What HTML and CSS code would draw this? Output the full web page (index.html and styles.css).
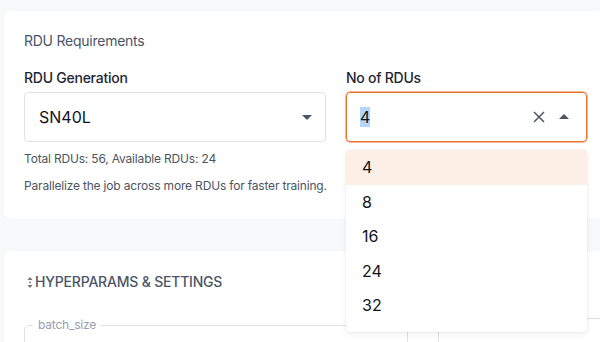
FILE: index.html
```html
<!DOCTYPE html>
<html lang="en">
  <head>
    <meta charset="UTF-8" />
    <title>RDU Requirements</title>
    <link rel="stylesheet" href="styles.css">
  </head>
  <body>
    <div class="page">
      <section class="card card-rdu">
        <h2 class="card-title">RDU Requirements</h2>
        <div class="field-row">
          <div class="field field-gen">
            <label class="field-label">RDU Generation</label>
            <div class="select">
              <span class="select-value">SN40L</span>
              <span class="caret caret-down"></span>
            </div>
            <p class="helper">Total RDUs: 56, Available RDUs: 24</p>
            <p class="helper helper-gap">Parallelize the job across more RDUs for faster training.</p>
          </div>
          <div class="field field-count">
            <label class="field-label">No of RDUs</label>
            <div class="select select-open">
              <span class="select-value"><span class="selected-text">4</span></span>
              <svg class="clear-icon" width="12" height="12" viewBox="0 0 12 12">
                <path d="M1 1 L11 11 M11 1 L1 11" stroke="#4b5563" stroke-width="1.5" fill="none" />
              </svg>
              <span class="caret caret-up"></span>
            </div>
            <ul class="menu">
              <li class="active">4</li>
              <li>8</li>
              <li>16</li>
              <li>24</li>
              <li>32</li>
            </ul>
          </div>
        </div>
      </section>
      <section class="card card-params">
        <h2 class="params-title">
          <svg class="sort-icon" width="6" height="11" viewBox="0 0 6 11">
            <path d="M3 0 L5.5 3 L0.5 3 Z M3 11 L0.5 8 L5.5 8 Z" fill="#6b7280" />
            <rect x="2.2" y="4.6" width="1.6" height="1.6" fill="#6b7280" />
          </svg>
          HYPERPARAMS &amp; SETTINGS
        </h2>
        <div class="params-grid">
          <fieldset class="outlined">
            <legend>batch_size</legend>
          </fieldset>
          <fieldset class="outlined">
            <legend></legend>
          </fieldset>
        </div>
      </section>
    </div>
  </body>
</html>
```

FILE: styles.css
```css
html,
body {
  margin: 0;
  overflow: hidden;
  height: 342px;
}
body {
  background: #f8f9fb;
  font-family: Inter, "Noto Sans", sans-serif;
  color: #1f2633;
}
.page {
  width: 596px;
  padding: 11px 0 0 4px;
}
.card {
  background: #fff;
  border-radius: 6px 0 0 6px;
  box-shadow: 0 0 2px rgba(15, 23, 42, 0.06);
  padding: 20px 0 25px 20px;
}
.card-title {
  margin: 0;
  font-size: 14px;
  font-weight: 400;
  line-height: 20px;
  letter-spacing: -0.25px;
  color: #4b5567;
}
.field-row {
  display: flex;
  gap: 20px;
  margin-top: 17px;
}
.field-gen {
  width: 302px;
}
.field-count {
  width: 241px;
  position: relative;
}
.field-label {
  display: block;
  font-size: 14px;
  font-weight: 500;
  line-height: 20px;
  letter-spacing: -0.25px;
  color: #1f2633;
  margin-bottom: 4px;
}
.select {
  display: flex;
  align-items: center;
  height: 48px;
  border: 1px solid #dfe2e7;
  border-radius: 4px;
  padding: 0 13px 0 14px;
}
.select-value {
  flex: 1;
  font-size: 16px;
  color: #111418;
}
.select-open {
  border-color: #e8742c;
  box-shadow: 0 0 0 0.5px #e8742c;
  padding-left: 13px;
  padding-right: 17px;
}
.selected-text {
  background: #b5d5fc;
}
.caret {
  width: 0;
  height: 0;
  border-left: 5px solid transparent;
  border-right: 5px solid transparent;
}
.caret-down {
  border-top: 5px solid #4b5563;
}
.caret-up {
  border-bottom: 5px solid #4b5563;
  margin-left: 14px;
  margin-top: -1px;
}
.clear-icon {
  display: block;
}
.helper {
  margin: 9px 0 0 0;
  font-size: 12px;
  line-height: 16px;
  letter-spacing: -0.18px;
  white-space: nowrap;
  color: #4b5563;
}
.helper-gap {
  margin-top: 11px;
}
.menu {
  position: absolute;
  top: 82px;
  left: 0;
  right: 0;
  margin: 0;
  padding: 0 0 9px 0;
  list-style: none;
  background: #fff;
  border-radius: 4px;
  box-shadow: 0 2px 6px rgba(15, 23, 42, 0.08), 0 0 1px rgba(15, 23, 42, 0.12);
  z-index: 2;
}
.menu li {
  height: 34.6px;
  line-height: 34.6px;
  padding-left: 16px;
  font-size: 16px;
  color: #111418;
}
.menu li.active {
  background: #fcefe6;
}
.card-params {
  margin-top: 32px;
  padding-top: 21px;
  height: 200px;
}
.params-title {
  display: flex;
  align-items: center;
  gap: 2px;
  margin: 0;
  padding-left: 3px;
  font-size: 14px;
  font-weight: 500;
  line-height: 20px;
  letter-spacing: -0.2px;
  color: #4b5567;
}
.params-grid {
  display: grid;
  grid-template-columns: 384px 384px;
  gap: 30px;
  margin-top: 26px;
}
.outlined {
  margin: 0;
  height: 60px;
  border: 1px solid #dcdfe4;
  border-radius: 5px;
  padding: 0 8px;
}
.outlined legend {
  font-size: 12px;
  line-height: 14px;
  letter-spacing: -0.2px;
  color: #98a0b0;
  padding: 0 5px;
}
```
